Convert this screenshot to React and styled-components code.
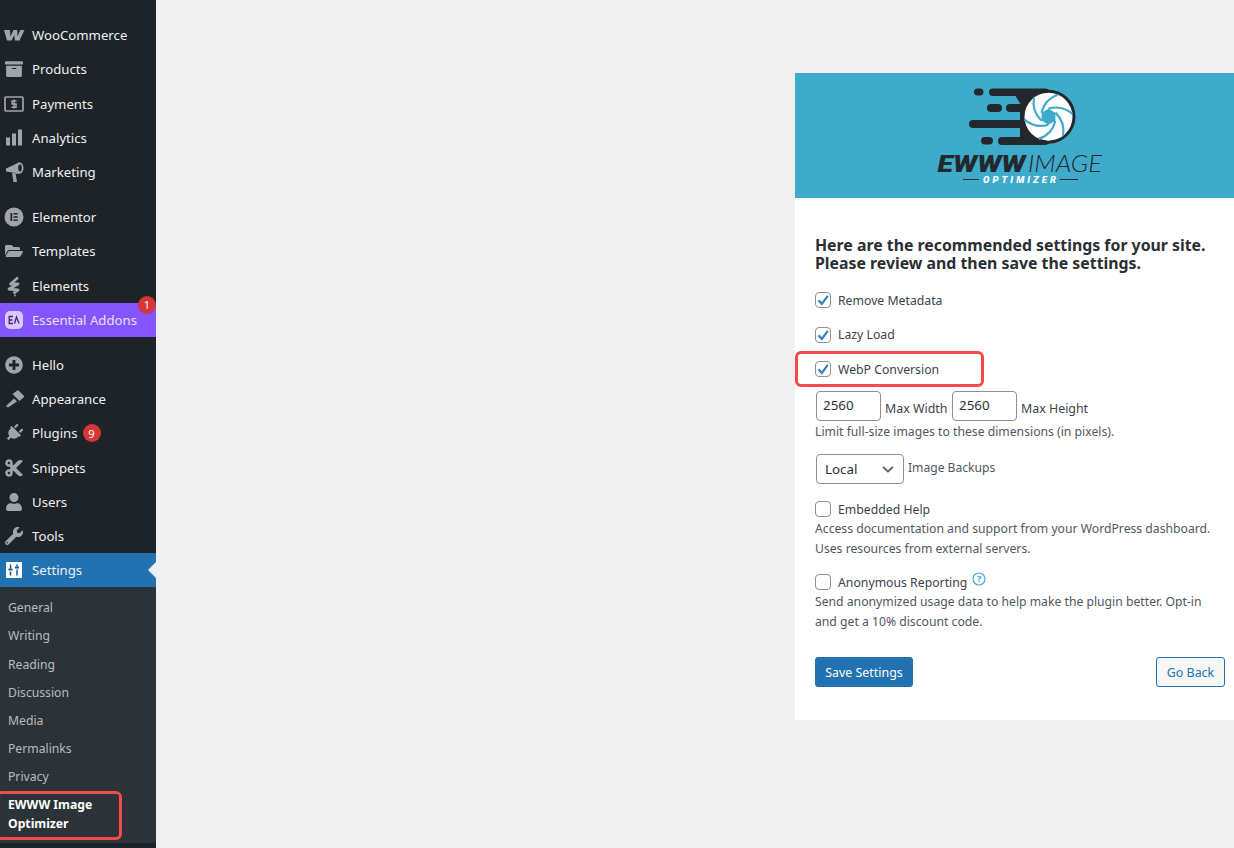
import React from "react";
import styled, { createGlobalStyle } from "styled-components";
import { FaArchive, FaFolderOpen, FaPlusCircle, FaPlug, FaCut, FaUser, FaWrench } from "react-icons/fa";

const Global = createGlobalStyle`
  html, body { margin: 0; padding: 0; height: 848px; overflow: hidden; background: #f0f0f1; }
  body { font-family: "Noto Sans", "Open Sans", sans-serif; font-size: 13px; color: #3c434a; }
  * { box-sizing: border-box; }
`;

const Page = styled.div`
  display: flex;
  width: 1234px;
  height: 848px;
  position: relative;
  overflow: hidden;
`;
const Sidebar = styled.nav`
  width: 156px;
  flex: none;
  height: 848px;
  background: #1d2327;
  padding-top: 18.2px;
  position: relative;
`;
const Row = styled.div`
  height: 34.2px;
  display: flex;
  align-items: center;
  position: relative;
  font-size: 13.2px;
  background: ${(p) => (p.$active ? "#2271b1" : p.$purple ? "#8255ff" : "transparent")};
  margin-bottom: ${(p) => (p.$sep ? "11px" : "0")};
  color: ${(p) => (p.$purple ? "#e9e0ff" : "#f0f0f1")};
`;
const IconSlot = styled.span`
  width: 32px;
  flex: none;
  display: flex;
  align-items: center;
  justify-content: center;
  padding-right: 4px;
  color: #a0a5aa;
  font-size: 18px;
`;
const TiltedIcon = styled.span`
  display: flex;
  transform: rotate(45deg);
`;
const Count = styled.span`
  width: 18px;
  height: 18px;
  border-radius: 50%;
  background: #d63638;
  color: #fff;
  font-size: 11px;
  display: inline-flex;
  align-items: center;
  justify-content: center;
  margin-left: 5px;
`;
const FloatCount = styled(Count)`
  position: absolute;
  right: 0;
  top: -7px;
  margin: 0;
`;
const Arrow = styled.span`
  position: absolute;
  right: 0;
  top: 9px;
  border: 8px solid transparent;
  border-right-color: #f0f0f1;
  border-left-width: 0;
`;
const SubMenu = styled.div`
  background: #2c3338;
  padding: 7px 0 0 8px;
  height: 256px;
`;
const SubItem = styled.div`
  height: 28.2px;
  line-height: 28.2px;
  font-size: 12.2px;
  color: ${(p) => (p.$current ? "#fff" : "#b9bcbf")};
  font-weight: ${(p) => (p.$current ? 700 : 400)};
`;
const SubCurrent = styled(SubItem)`
  height: 38px;
  line-height: 19px;
  padding-top: 3.2px;
  width: 100px;
`;
const Main = styled.main`
  flex: 1;
  padding: 73px 0 0 639px;
`;
const Panel = styled.section`
  width: 439px;
  height: 647px;
  background: #fff;
`;
const Banner = styled.header`
  height: 125px;
  background: #3eabca;
  padding: 2px 0 0 105px;
`;
const Body = styled.div`
  padding: 38px 9px 0 20px;
`;
const Heading = styled.h2`
  margin: 0 0 18px;
  font-size: 15.85px;
  line-height: 18px;
  font-weight: 700;
  color: #2a2f34;
  white-space: nowrap;
`;
const CheckRow = styled.div`
  display: flex;
  align-items: center;
  height: 20px;
  margin-bottom: ${(p) => p.$mb ?? 14.5}px;
  font-size: 12.25px;
  color: #3c434a;
`;
const Box = styled.span`
  width: 16px;
  height: 16px;
  flex: none;
  border: 1px solid #8c8f94;
  border-radius: 4px;
  margin-right: 7px;
  background: #fff;
  display: flex;
  align-items: center;
  justify-content: center;
`;
const SizeRow = styled.div`
  display: flex;
  align-items: center;
  gap: 4px;
  height: 30px;
  padding-left: 1px;
  margin-top: -2px;
  font-size: 12.4px;
`;
const SizeLabel = styled.span`
  margin: 5px 0 0;
  width: ${(p) => p.$w}px;
  padding-left: 0;
  white-space: nowrap;
`;
const Input = styled.div`
  width: 65px;
  height: 30px;
  border: 1px solid #8c8f94;
  border-radius: 4px;
  padding: 0 6px 3px;
  display: flex;
  align-items: center;
  color: #2c3338;
  font-size: 13.4px;
  background: #fff;
`;
const Help = styled.p`
  margin: ${(p) => p.$mt ?? 0}px 0 ${(p) => p.$mb ?? 0}px;
  font-size: 12.2px;
  line-height: 20px;
  color: #50575e;
  white-space: nowrap;
`;
const SelectRow = styled.div`
  display: flex;
  align-items: flex-start;
  padding-left: 1px;
  margin-bottom: 15px;
  font-size: 12.1px;
`;
const Select = styled.div`
  width: 88px;
  height: 30px;
  border: 1px solid #8c8f94;
  border-radius: 4px;
  padding: 0 8px;
  display: flex;
  align-items: center;
  justify-content: space-between;
  color: #2c3338;
  font-size: 13.4px;
  margin-right: 4px;
`;
const SelectLabel = styled.span`
  line-height: 27px;
  color: #50575e;
`;
const HelpIcon = styled.span`
  display: inline-flex;
  margin: -6px 0 0 5px;
`;
const Actions = styled.div`
  display: flex;
  justify-content: space-between;
  margin-top: 25px;
`;
const Button = styled.div`
  height: 30px;
  border-radius: 3px;
  border: 1px solid #2271b1;
  background: ${(p) => (p.$primary ? "#2271b1" : "#f6f7f7")};
  color: ${(p) => (p.$primary ? "#fff" : "#2271b1")};
  width: ${(p) => p.$w}px;
  display: flex;
  align-items: center;
  justify-content: center;
  font-size: 12.4px;
`;
const Highlight = styled.div`
  position: absolute;
  left: ${(p) => p.$x}px;
  top: ${(p) => p.$y}px;
  width: ${(p) => p.$w}px;
  height: ${(p) => p.$h}px;
  border: 3.500px solid #f34a4a;
  border-radius: 6px;
  pointer-events: none;
`;

const Svg = ({ w = 20, h = 20, children }) => (
  <svg width={w} height={h} viewBox={`0 0 ${w} ${h}`} fill="currentColor">{children}</svg>
);
const WooIcon = () => (
  <Svg w={22} h={14}><path d="M1 2h6l.4 6.500L10.500 2h3.700l.4 6.500L17.200 2H21.500l-5 10.500h-4.700l-.5-5.500-2.700 5.500H4z" /></Svg>
);
const PaymentsIcon = () => (
  <svg width="20" height="16" viewBox="0 0 20 16">
    <rect x="1" y="1" width="18" height="14" rx="1" fill="none" stroke="currentColor" strokeWidth="1.700" />
    <path d="M12.500 5H8v3h4v3.200H7.500M10 3.500v9" fill="none" stroke="currentColor" strokeWidth="1.500" />
  </svg>
);
const AnalyticsIcon = () => (
  <Svg w={18} h={17}><rect x="1" y="8.500" width="4" height="8" /><rect x="7" y="4.500" width="4" height="12" /><rect x="13" y="0.500" width="4" height="16" /></Svg>
);
const MegaphoneIcon = () => (
  <svg width="20" height="24" viewBox="3 1 20 24">
    <path d="M5 9.500 18 3.500v11.500L11 14l1.500 9h3.500L14.500 14 5 12.500z" fill="currentColor" />
    <ellipse cx="18.500" cy="9" rx="4" ry="5.800" fill="currentColor" />
    <ellipse cx="19" cy="9" rx="1.800" ry="3.400" fill="#1d2327" />
  </svg>
);
const ElementorIcon = () => (
  <svg width="20" height="20" viewBox="0 0 20 20">
    <circle cx="10" cy="10" r="9.500" fill="currentColor" />
    <path d="M6.500 6h1.700v8H6.500zM9.500 6h4.200v1.600H9.500zM9.500 9.200h4.200v1.600H9.500zM9.500 12.400h4.200V14H9.500z" fill="#1d2327" />
  </svg>
);
const ElementsIcon = () => (
  <svg width="20" height="22" viewBox="3 0 20 22">
    <path d="M17 2.500 9.500 9H17L8 14l9 1-4.500 3.500" fill="none" stroke="currentColor" strokeWidth="2.800" strokeLinejoin="round" />
    <circle cx="14" cy="20.500" r="0.900" fill="currentColor" />
  </svg>
);
const BrushIcon = () => (
  <svg width="20" height="20" viewBox="3 1 20 20">
    <path d="M11.500 6 17 2l6.500 6.500-5 4.500z" fill="currentColor" />
    <path d="M13 10.500l3 3-9 6-2-1.500z" fill="currentColor" />
  </svg>
);
const EaIcon = () => (
  <svg width="18" height="18" viewBox="0 0 18 18">
    <rect width="18" height="18" rx="5" fill="#d9c9ff" />
    <path d="M8 5.500H4.200v7H8M4.200 9h3.300M9.500 12.500 11.500 6l2.500 6.500" fill="none" stroke="#3b2a78" strokeWidth="1.300" />
  </svg>
);
const SettingsIcon = () => (
  <svg width="16" height="16" viewBox="0 0 16 16">
    <rect width="16" height="16" rx="1" fill="#fff" />
    <path d="M4.500 2.500v4M4.500 9.500v4M11 2.500v2M11 7.500v6" stroke="#1a5b8f" strokeWidth="1.500" />
    <rect x="2.500" y="6.500" width="4" height="2" fill="#1a5b8f" />
    <rect x="9" y="4.500" width="4" height="2" fill="#1a5b8f" />
  </svg>
);
const Check = () => (
  <svg width="14" height="14" viewBox="0 0 14 14">
    <path d="M2.500 7.200 5.800 11 11.800 2.800" fill="none" stroke="#3582c4" strokeWidth="2.200" />
  </svg>
);
const Chevron = () => (
  <svg width="14" height="14" viewBox="0 0 14 14">
    <path d="M2 4.800 7 9.500l5-4.700" fill="none" stroke="#50575e" strokeWidth="1.700" />
  </svg>
);
const QuestionIcon = () => (
  <svg width="14" height="14" viewBox="0 0 14 14">
    <circle cx="7" cy="7" r="6" fill="none" stroke="#3eabca" strokeWidth="1.200" />
    <text x="7" y="10.300" textAnchor="middle" fontSize="9.500" fontWeight="700" fill="#3eabca" fontFamily="Noto Sans, sans-serif">?</text>
  </svg>
);

const blades = [0, 60, 120, 180, 240, 300];
const Logo = () => (
  <svg width="220" height="120" viewBox="0 0 220 120">
    <g fill="#23282d">
      <rect x="74" y="13.500" width="9.500" height="7" rx="3.500" />
      <rect x="87" y="29" width="15" height="8" rx="4" />
      <rect x="106" y="29" width="30" height="8" rx="4" />
      <rect x="69" y="45" width="66" height="8" rx="4" />
      <rect x="81" y="62" width="12" height="7.500" rx="3.700" />
      <rect x="98" y="62" width="51" height="8" rx="4" />
      <rect x="89" y="13.500" width="60" height="7.500" rx="3.700" />
      <path d="M115 20h20v10h-14zM120 36h15v10h-15zM120 52h15v11h-15z" />
      <circle cx="148.500" cy="41.700" r="27" />
    </g>
    <circle cx="148.500" cy="41.700" r="24" fill="#fff" />
    <g stroke="#3eabca" strokeWidth="2.200" fill="none">
      {blades.map((a) => (
        <path key={a} d="M141.500 37.700 Q145 24 158 19.500" transform={`rotate(${a} 148.500 41.700)`} />
      ))}
    </g>
    <path d="M148.500 33.700 155.400 37.700v8L148.500 49.700 141.600 45.700v-8z" fill="#3eabca" />
    <text x="37.500" y="97" fontFamily="Roboto" fontWeight="900" fontStyle="italic" fontSize="24" fill="#23282d" textLength="88" lengthAdjust="spacingAndGlyphs">EWWW</text>
    <text x="128" y="97" fontFamily="Lato" fontWeight="300" fontStyle="italic" fontSize="23.500" fill="#23282d" textLength="74" lengthAdjust="spacingAndGlyphs">IMAGE</text>
    <text x="83" y="107.800" fontFamily="Roboto" fontWeight="900" fontStyle="italic" fontSize="9.500" fill="#fff" textLength="73" lengthAdjust="spacing">OPTIMIZER</text>
    <path d="M63 104.500h16M160 104.500h18" stroke="#23282d" strokeWidth="1" />
  </svg>
);

const CheckItem = ({ on, mb, children, extra }) => (
  <CheckRow $mb={mb}>
    <Box>{on && <Check />}</Box>
    {children}
    {extra}
  </CheckRow>
);

const menu1 = [
  ["WooCommerce", <WooIcon />],
  ["Products", <FaArchive />],
  ["Payments", <PaymentsIcon />],
  ["Analytics", <AnalyticsIcon />],
  ["Marketing", <MegaphoneIcon />, true],
];
const menu2 = [
  ["Elementor", <ElementorIcon />],
  ["Templates", <FaFolderOpen />],
  ["Elements", <ElementsIcon />],
];
const menu3 = [
  ["Appearance", <BrushIcon />],
  ["Plugins", <TiltedIcon><FaPlug /></TiltedIcon>, <Count>9</Count>],
  ["Snippets", <FaCut size={20} />],
  ["Users", <FaUser />],
  ["Tools", <FaWrench />],
];
const subs = ["General", "Writing", "Reading", "Discussion", "Media", "Permalinks", "Privacy"];

export default function App() {
  return (
    <Page>
      <Global />
      <Sidebar>
        {menu1.map(([t, i, s]) => (
          <Row key={t} $sep={s}><IconSlot>{i}</IconSlot>{t}</Row>
        ))}
        {menu2.map(([t, i]) => (
          <Row key={t}><IconSlot>{i}</IconSlot>{t}</Row>
        ))}
        <Row $purple $sep>
          <IconSlot><EaIcon /></IconSlot>Essential Addons
          <FloatCount>1</FloatCount>
        </Row>
        <Row><IconSlot><FaPlusCircle /></IconSlot>Hello</Row>
        {menu3.map(([t, i, c]) => (
          <Row key={t}><IconSlot>{i}</IconSlot>{t}{c}</Row>
        ))}
        <Row $active><IconSlot><SettingsIcon /></IconSlot>Settings<Arrow /></Row>
        <SubMenu>
          {subs.map((s) => <SubItem key={s}>{s}</SubItem>)}
          <SubCurrent $current>EWWW Image Optimizer</SubCurrent>
        </SubMenu>
      </Sidebar>
      <Main>
        <Panel>
          <Banner><Logo /></Banner>
          <Body>
            <Heading>
              Here are the recommended settings for your site.<br />
              Please review and then save the settings.
            </Heading>
            <CheckItem on>Remove Metadata</CheckItem>
            <CheckItem on>Lazy Load</CheckItem>
            <CheckItem on mb={14}>WebP Conversion</CheckItem>
            <SizeRow>
              <Input>2560</Input>
              <SizeLabel $w={63}>Max Width</SizeLabel>
              <Input>2560</Input>
              <SizeLabel>Max Height</SizeLabel>
            </SizeRow>
            <Help $mt={1} $mb={12}>Limit full-size images to these dimensions (in pixels).</Help>
            <SelectRow>
              <Select>Local<Chevron /></Select>
              <SelectLabel>Image Backups</SelectLabel>
            </SelectRow>
            <CheckItem mb={0}>Embedded Help</CheckItem>
            <Help $mb={13}>
              Access documentation and support from your WordPress dashboard.<br />
              Uses resources from external servers.
            </Help>
            <CheckItem mb={0} extra={<HelpIcon><QuestionIcon /></HelpIcon>}>Anonymous Reporting</CheckItem>
            <Help>
              Send anonymized usage data to help make the plugin better. Opt-in<br />
              and get a 10% discount code.
            </Help>
            <Actions>
              <Button $primary $w={98}>Save Settings</Button>
              <Button $w={69}>Go Back</Button>
            </Actions>
          </Body>
        </Panel>
      </Main>
      <Highlight $x={795} $y={351} $w={189} $h={36} />
      <Highlight $x={-4} $y={791} $w={126} $h={49} />
    </Page>
  );
}
